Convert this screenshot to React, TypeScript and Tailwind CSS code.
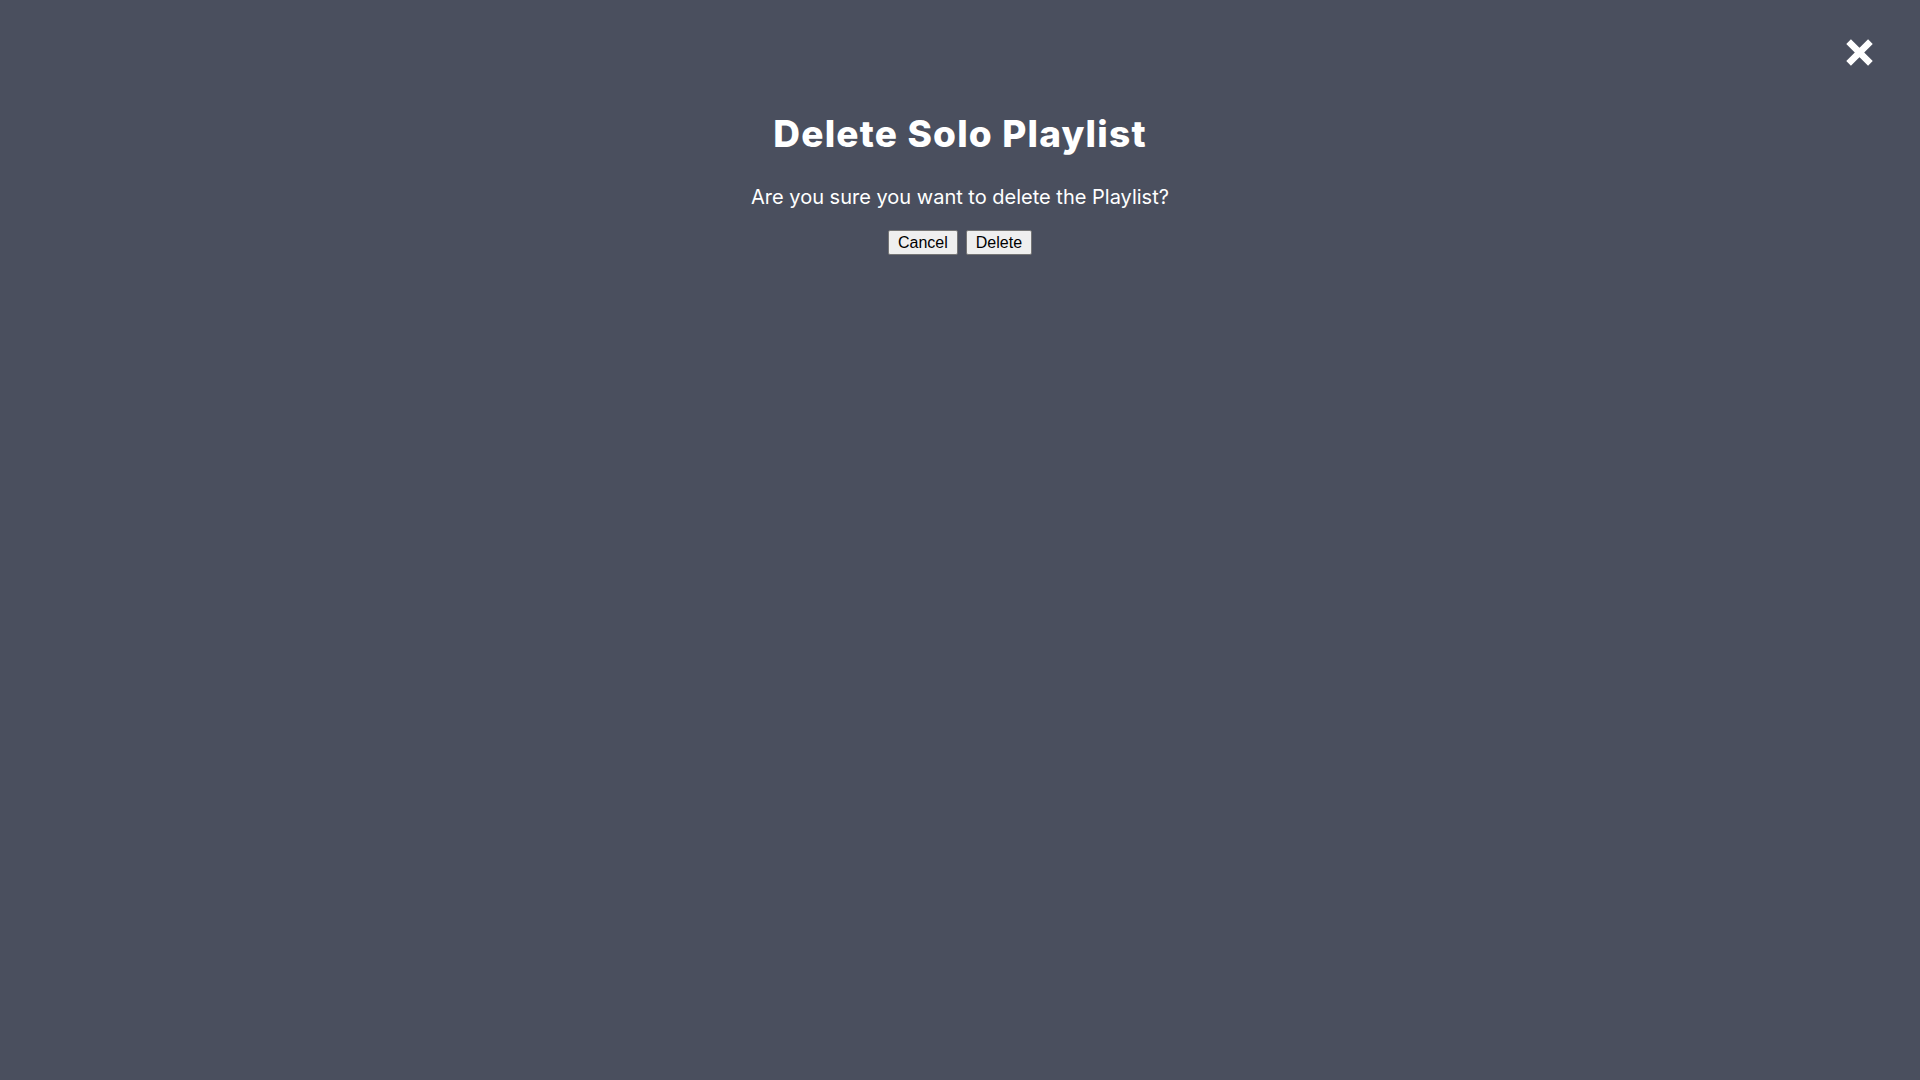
export default function App() {
  return (
    <div
      className="relative min-h-screen w-full bg-[#4a4f5e] text-white"
      style={{ fontFamily: "Inter, 'Noto Sans', sans-serif" }}
    >
      {/* Close button */}
      <button
        type="button"
        aria-label="Close"
        className="absolute right-[47px] top-[39px] flex h-[27px] w-[27px] items-center justify-center"
      >
        <svg width="27" height="27" viewBox="0 0 27 27" fill="none">
          <path
            d="M2.6 2.6 L24.4 24.4 M24.4 2.6 L2.6 24.4"
            stroke="#ffffff"
            strokeWidth="6.6"
            strokeLinecap="butt"
          />
        </svg>
      </button>

      <div className="flex flex-col items-center pt-[114px]">
        <h1 className="text-[37px] leading-10 font-extrabold tracking-[1.2px]">
          Delete Solo Playlist
        </h1>
        <p className="mt-[29px] text-xl">Are you sure you want to delete the Playlist?</p>
        <div
          className="mt-[19px] flex gap-2 text-base text-black"
          style={{ fontFamily: "'Liberation Sans', Arial, sans-serif" }}
        >
          <button
            type="button"
            className="h-[25px] rounded-[2px] border border-[#767676] bg-[#efefef] px-[9px] leading-none"
          >
            Cancel
          </button>
          <button
            type="button"
            className="h-[25px] rounded-[2px] border border-[#767676] bg-[#efefef] px-[9px] leading-none"
          >
            Delete
          </button>
        </div>
      </div>
    </div>
  );
}
